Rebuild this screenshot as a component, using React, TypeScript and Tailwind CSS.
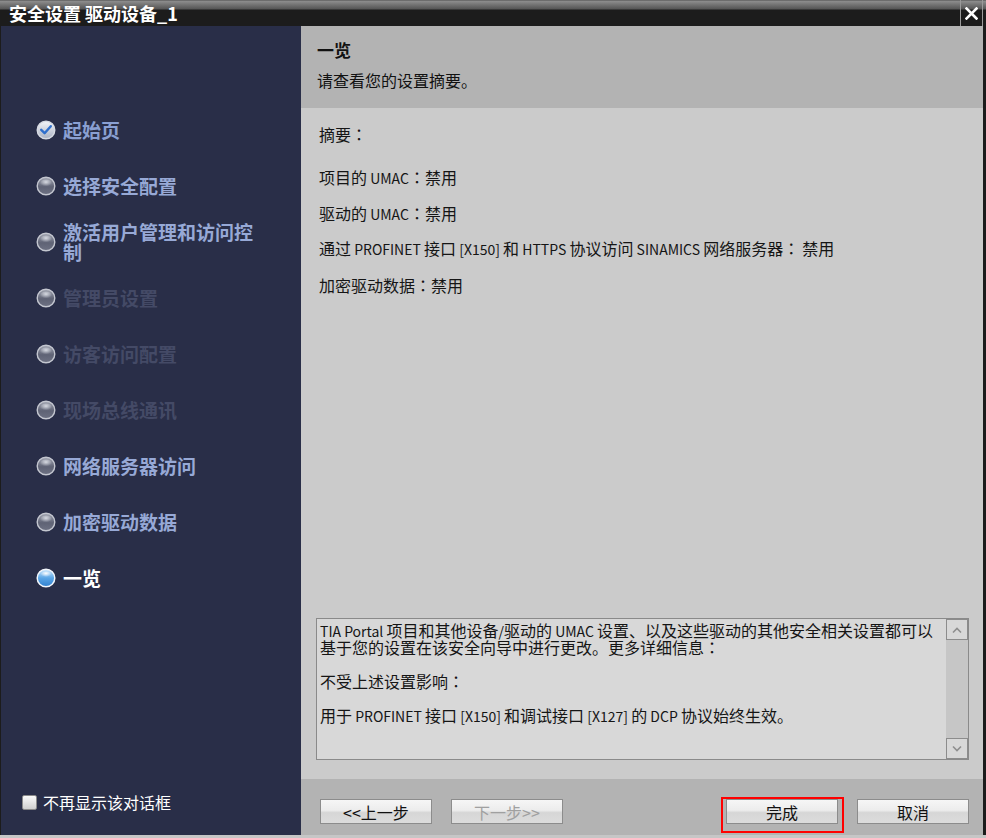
import React from "react";

type Kind = "done" | "off" | "active";

function Orb({ kind }: { kind: Kind }) {
  if (kind === "off") {
    return (
      <svg width="20" height="20" viewBox="0 0 20 20" className="shrink-0">
        <defs>
          <linearGradient id="offg" x1="0" y1="0" x2="0" y2="1">
            <stop offset="0" stopColor="#a3a7b3" />
            <stop offset="0.55" stopColor="#5f6375" />
            <stop offset="1" stopColor="#6d7183" />
          </linearGradient>
          <radialGradient id="offh" cx="0.5" cy="0.35" r="0.55">
            <stop offset="0" stopColor="#e0e3ea" stopOpacity="0.9" />
            <stop offset="1" stopColor="#e0e3ea" stopOpacity="0" />
          </radialGradient>
        </defs>
        <circle cx="10" cy="10" r="8.8" fill="url(#offg)" stroke="#c4c7d0" strokeWidth="1.4" />
        <ellipse cx="10" cy="7.2" rx="5.8" ry="3.8" fill="url(#offh)" />
      </svg>
    );
  }
  if (kind === "done") {
    return (
      <svg width="20" height="20" viewBox="0 0 20 20" className="shrink-0">
        <defs>
          <linearGradient id="doneg" x1="0" y1="0" x2="0" y2="1">
            <stop offset="0" stopColor="#f4f6fa" />
            <stop offset="1" stopColor="#a9b1c2" />
          </linearGradient>
        </defs>
        <circle cx="10" cy="10" r="8.8" fill="url(#doneg)" stroke="#d7dbe3" strokeWidth="1.4" />
        <path d="M5.2 9.8 L8.6 13.2 L14.8 6.2" fill="none" stroke="#2f6fcc" strokeWidth="2.4" strokeLinecap="round" strokeLinejoin="round" />
      </svg>
    );
  }
  return (
    <svg width="20" height="20" viewBox="0 0 20 20" className="shrink-0">
      <defs>
        <linearGradient id="actg" x1="0" y1="0" x2="0" y2="1">
          <stop offset="0" stopColor="#d4ecff" />
          <stop offset="0.5" stopColor="#5aa6e6" />
          <stop offset="1" stopColor="#2f7fce" />
        </linearGradient>
        <radialGradient id="acth" cx="0.5" cy="0.3" r="0.5">
          <stop offset="0" stopColor="#ffffff" stopOpacity="0.95" />
          <stop offset="1" stopColor="#ffffff" stopOpacity="0" />
        </radialGradient>
      </defs>
      <circle cx="10" cy="10" r="8.8" fill="url(#actg)" stroke="#f2f6fb" strokeWidth="1.5" />
      <ellipse cx="10" cy="6.8" rx="5.6" ry="3.4" fill="url(#acth)" />
    </svg>
  );
}

const steps: { label: string; kind: Kind; color: string }[] = [
  { label: "起始页", kind: "done", color: "text-[#8aa0d2]" },
  { label: "选择安全配置", kind: "off", color: "text-[#97a9d6]" },
  { label: "激活用户管理和访问控制", kind: "off", color: "text-[#97a9d6]" },
  { label: "管理员设置", kind: "off", color: "text-[#444a66]" },
  { label: "访客访问配置", kind: "off", color: "text-[#444a66]" },
  { label: "现场总线通讯", kind: "off", color: "text-[#444a66]" },
  { label: "网络服务器访问", kind: "off", color: "text-[#97a9d6]" },
  { label: "加密驱动数据", kind: "off", color: "text-[#97a9d6]" },
  { label: "一览", kind: "active", color: "text-white" },
];

// Render mixed text: Latin runs slightly narrower, full-width colon centred.
function T({ s }: { s: string }) {
  const parts = s.match(/[A-Za-z0-9 \[\]\/_.<>]+|：|[^A-Za-z0-9 \[\]\/_.<>：]+/g) || [];
  return (
    <>
      {parts.map((p, i) => {
        if (p === "：")
          return (
            <span key={i} className="font-['Noto_Sans_CJK_JP',sans-serif] leading-none">
              ：
            </span>
          );
        if (/^[A-Za-z0-9 \[\]\/_.<>]+$/.test(p))
          return (
            <span key={i} className="text-[14px] leading-none">
              {p}
            </span>
          );
        return (
          <span key={i} className="leading-none">
            {p}
          </span>
        );
      })}
    </>
  );
}

function Btn({ children, disabled }: { children: React.ReactNode; disabled?: boolean }) {
  return (
    <div
      className={`flex h-[25px] w-[112px] items-center justify-center border border-[#8c8c8c] bg-[linear-gradient(to_bottom,#f6f6f6_0%,#ececec_45%,#d6d6d6_55%,#dcdcdc_100%)] text-[16px] leading-none ${
        disabled ? "text-[#a0a0a0]" : "text-[#111111]"
      }`}
    >
      {children}
    </div>
  );
}

function Chevron({ up }: { up?: boolean }) {
  return (
    <svg width="12" height="8" viewBox="0 0 12 8">
      <path
        d={up ? "M2 6.5 L6 2.5 L10 6.5" : "M2 1.5 L6 5.5 L10 1.5"}
        fill="none"
        stroke="#8e8e8e"
        strokeWidth="1.6"
      />
    </svg>
  );
}

export default function App() {
  return (
    <div className="flex h-[838px] w-[986px] flex-col overflow-hidden border-b-[3px] border-[#c6c6c6] bg-[#1c1c1c] font-['Noto_Sans_CJK_SC','Noto_Sans',sans-serif]">
      {/* Title bar */}
      <div className="flex h-[26px] shrink-0 items-stretch bg-[linear-gradient(to_bottom,#4a4a4a_0px,#8e8e8e_1px,#6a6a6a_6px,#555555_9px,#1c1c1c_10px,#1c1c1c_100%)]">
        <div className="flex-1 pl-[9px] text-[18px] font-bold leading-[26px] text-white">安全设置 驱动设备_1</div>
        <div className="mr-[3px] flex w-[23px] items-center justify-center border-x border-[#9a9a9a]">
          <svg width="13" height="13" viewBox="0 0 13 13">
            <path d="M1.5 1.5 L11.5 11.5 M11.5 1.5 L1.5 11.5" stroke="#ffffff" strokeWidth="2.6" strokeLinecap="square" />
          </svg>
        </div>
      </div>

      {/* Main */}
      <div className="flex h-[809px] pl-px pr-[3px]">
        {/* Sidebar */}
        <div className="flex w-[300px] shrink-0 flex-col bg-[#292e48]">
          <div className="flex flex-col pl-[35px] pt-[76px]">
            {steps.map((s, i) => (
              <div key={i} className="flex h-[56px] items-center gap-[7px]">
                <Orb kind={s.kind} />
                <div className={`w-[200px] text-[19px] font-bold leading-[20px] ${s.color}`}>{s.label}</div>
              </div>
            ))}
          </div>
          <div className="mt-auto flex items-center gap-[6px] pb-[23px] pl-[21px]">
            <div className="h-[15px] w-[15px] rounded-[2px] border border-[#8a8a8a] bg-[linear-gradient(to_bottom,#fafafa,#cfcfcf)]" />
            <div className="text-[16px] leading-[20px] text-white">不再显示该对话框</div>
          </div>
        </div>

        {/* Right */}
        <div className="flex flex-1 flex-col">
          <div className="h-[82px] shrink-0 bg-[#b3b3b3] pl-4">
            <div className="pt-[14px] text-[17px] font-bold leading-[20px] text-[#111111]">一览</div>
            <div className="mt-[10px] text-[16px] leading-[20px] text-[#111111]">请查看您的设置摘要。</div>
          </div>

          <div className="flex h-[671px] flex-col bg-[#cbcbcb]">
            <div className="pl-[18px] pt-4 text-[16px] leading-[20px] text-[#151515]">
              <div className="h-[20px]"><T s="摘要：" /></div>
              <div className="mt-[23px] h-[20px]"><T s="项目的 UMAC：禁用" /></div>
              <div className="mt-4 h-[20px]"><T s="驱动的 UMAC：禁用" /></div>
              <div className="mt-[15px] h-[20px]"><T s="通过 PROFINET 接口 [X150] 和 HTTPS 协议访问 SINAMICS 网络服务器： 禁用" /></div>
              <div className="mt-[17px] h-[20px]"><T s="加密驱动数据：禁用" /></div>
            </div>

            <div className="mb-[19px] ml-[15px] mt-auto flex h-[142px] w-[653px] border border-[#8a8a8a] bg-[#d8d8d8]">
              <div className="flex-1 overflow-hidden whitespace-nowrap pl-[3px] pt-[3px] text-[16px] leading-[17px] text-[#151515]">
                <div className="h-[17px]"><T s="TIA Portal 项目和其他设备/驱动的 UMAC 设置、以及这些驱动的其他安全相关设置都可以" /></div>
                <div className="h-[17px]"><T s="基于您的设置在该安全向导中进行更改。更多详细信息：" /></div>
                <div className="h-[17px]" />
                <div className="h-[17px]"><T s="不受上述设置影响：" /></div>
                <div className="h-[17px]" />
                <div className="h-[17px]"><T s="用于 PROFINET 接口 [X150] 和调试接口 [X127] 的 DCP 协议始终生效。" /></div>
              </div>
              <div className="flex w-[22px] flex-col bg-[#c6c6c6]">
                <div className="flex h-[21px] items-center justify-center border border-[#8c8c8c] bg-[#d8d8d8]">
                  <Chevron up />
                </div>
                <div className="flex-1" />
                <div className="flex h-[21px] items-center justify-center border border-[#8c8c8c] bg-[#d8d8d8]">
                  <Chevron />
                </div>
              </div>
            </div>
          </div>

          <div className="flex h-[56px] shrink-0 justify-between bg-[#b3b3b3] pl-[19px] pr-[14px] pt-5">
            <div className="flex gap-[19px]">
              <Btn>&lt;&lt;上一步</Btn>
              <Btn disabled>下一步&gt;&gt;</Btn>
            </div>
            <div className="flex gap-[19px]">
              <div className="relative">
                <Btn>完成</Btn>
                <div className="pointer-events-none absolute left-[-5px] top-[-2px] h-[36px] w-[123px] border-2 border-[#ff0000]" />
              </div>
              <Btn>取消</Btn>
            </div>
          </div>
        </div>
      </div>
    </div>
  );
}
